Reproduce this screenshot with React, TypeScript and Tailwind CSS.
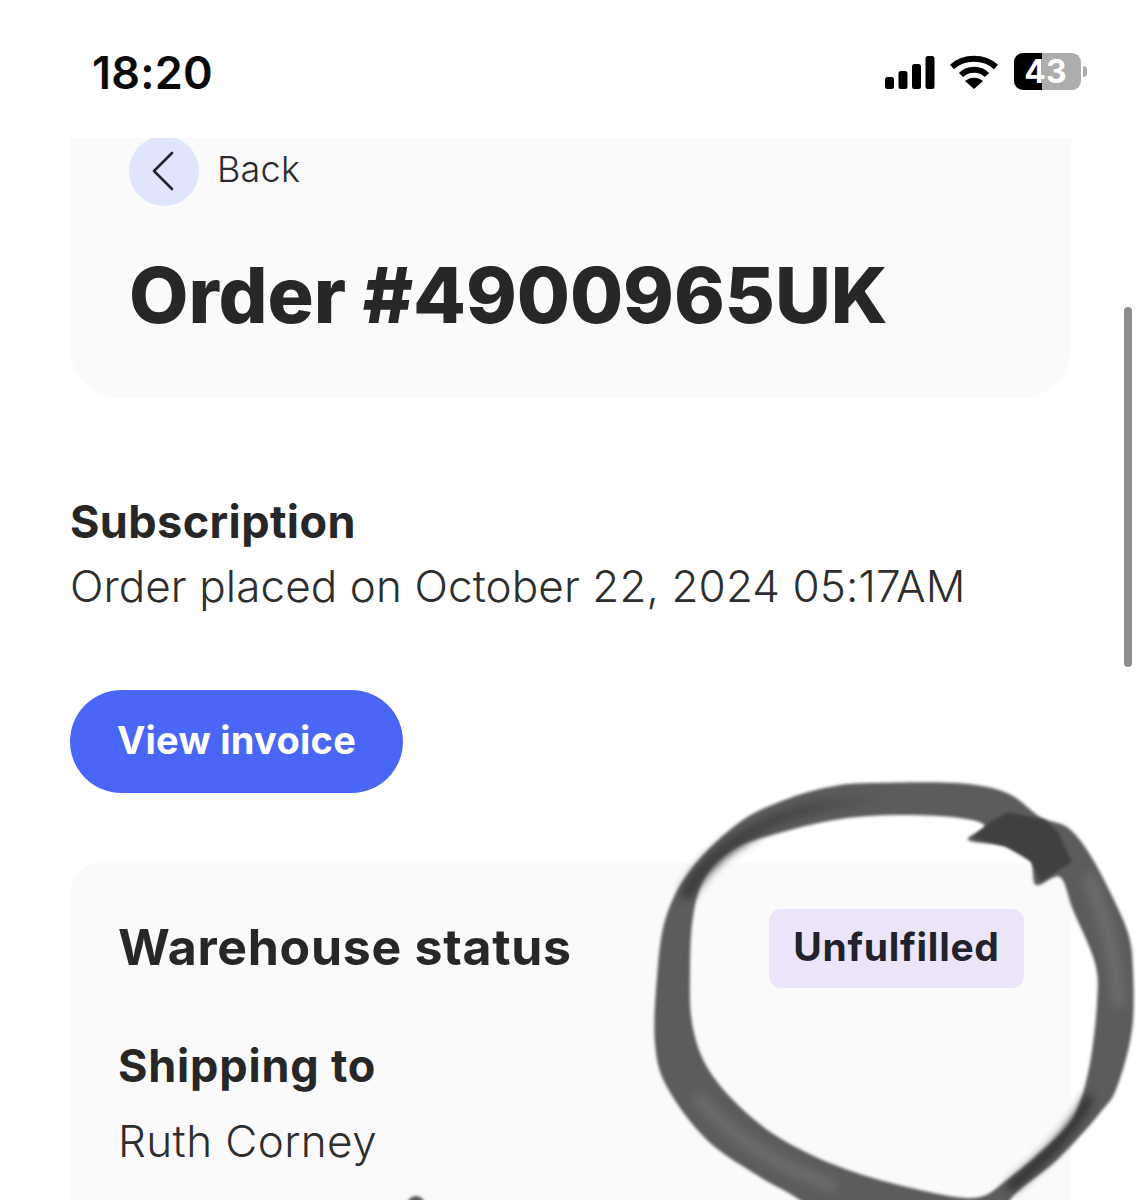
type P = [number, number];

function smooth(pts: P[]): string {
  const n = pts.length;
  let d = `M${pts[0][0]} ${pts[0][1]}`;
  for (let i = 0; i < n; i++) {
    const p0 = pts[(i - 1 + n) % n];
    const p1 = pts[i];
    const p2 = pts[(i + 1) % n];
    const p3 = pts[(i + 2) % n];
    const c1x = p1[0] + (p2[0] - p0[0]) / 6;
    const c1y = p1[1] + (p2[1] - p0[1]) / 6;
    const c2x = p2[0] - (p3[0] - p1[0]) / 6;
    const c2y = p2[1] - (p3[1] - p1[1]) / 6;
    d += ` C${c1x} ${c1y} ${c2x} ${c2y} ${p2[0]} ${p2[1]}`;
  }
  return d + " Z";
}

const outer: P[] = [
  [873, 783], [957, 783], [1007, 793], [1040, 817], [1067, 827], [1087, 850], [1109, 890], [1128, 933],
  [1133, 970], [1132, 1030], [1117, 1087], [1100, 1113], [1057, 1160], [1010, 1200], [1000, 1240], [850, 1240],
  [800, 1200], [760, 1177], [707, 1140], [667, 1087], [655, 1043], [657, 977], [666, 917], [692, 868],
  [740, 822], [790, 798], [835, 786],
];
const inner: P[] = [
  [907, 815], [960, 818], [985, 826], [968, 840], [1005, 846], [1030, 860], [1036, 885], [1060, 877],
  [1073, 910], [1095, 963], [1097, 1003], [1090, 1063], [1077, 1110], [1057, 1137], [1007, 1180], [973, 1198],
  [907, 1187], [840, 1167], [783, 1140], [740, 1107], [707, 1067], [692, 1023], [690, 970], [693, 917],
  [705, 877], [735, 848], [790, 830], [847, 818],
];

export default function App() {
  return (
    <div className="relative h-[1200px] w-[1141px] overflow-hidden bg-white text-[#272727] font-['Inter',sans-serif]">
      {/* status bar */}
      <div className="flex h-[138px] items-start justify-between pl-[92px] pr-[54px] pt-[45px]">
        <span className="text-[45px] font-semibold leading-[55px] tracking-[0.2px] text-[#0a0a0a]">18:20</span>
        <div className="mt-[8px] flex items-center">
          <svg width="52" height="36" viewBox="0 0 52 36" className="block">
            <rect x="0" y="23" width="9" height="12" rx="2.5" fill="#000" />
            <rect x="13.5" y="17" width="9" height="18" rx="2.5" fill="#000" />
            <rect x="27" y="10" width="9" height="25" rx="2.5" fill="#000" />
            <rect x="40.5" y="2" width="9" height="33" rx="2.5" fill="#000" />
          </svg>
          <svg width="48" height="36" viewBox="0 0 48 36" className="ml-[13px] block">
            <path d="M2 13 C14 2 34 2 46 13" fill="none" stroke="#000" strokeWidth="6" />
            <path d="M11 21 C18 14 30 14 37 21" fill="none" stroke="#000" strokeWidth="6" />
            <path d="M24 35 L15 27 C20 22.5 28 22.5 33 27 Z" fill="#000" />
          </svg>
          <div className="relative ml-[16px] flex h-[37px] w-[67px] overflow-hidden rounded-[9px] bg-[#adadad]">
            <div className="h-full w-[28px] bg-black" />
            <span className="absolute inset-0 flex items-center justify-center pr-[4px] text-[32px] font-bold text-white">43</span>
          </div>
          <div className="ml-[2px] h-[11px] w-[4px] rounded-r-full bg-[#adadad]" />
        </div>
      </div>

      {/* header panel */}
      <div className="mx-[70px] h-[260px] overflow-hidden rounded-b-[50px] bg-[#fafafa] pl-[59px]">
        <div className="flex h-[67px] items-center">
          <div className="flex h-[70px] w-[70px] shrink-0 -translate-y-[1px] items-center justify-center rounded-full bg-[#dfe5fb]">
            <svg width="24" height="40" viewBox="0 0 24 40" fill="none" stroke="#24242c" strokeWidth="2.6" strokeLinecap="round" strokeLinejoin="round" className="-ml-[3px]">
              <path d="M21 2 L3 20 L21 38" />
            </svg>
          </div>
          <span className="ml-[18px] -translate-y-[3px] text-[36px] font-light leading-none tracking-[0.2px] text-[#2b2b2f]">Back</span>
        </div>
        <h1 className="mt-[45px] text-[77px] font-extrabold leading-[90px] tracking-[-0.1px]">Order #4900965UK</h1>
      </div>

      {/* details */}
      <div className="px-[70px] pt-[97px]">
        <div className="text-[45px] font-bold leading-[54px] tracking-[0.4px]">Subscription</div>
        <div className="mt-[10px] text-[44px] font-light leading-[54px] tracking-[0.1px] text-[#2e2e2e]">Order placed on October 22, 2024 05:17AM</div>
        <div className="mt-[77px] flex h-[103px] w-[333px] items-center justify-center rounded-full bg-[#4a66f7] pb-[3px] text-[38px] font-bold tracking-[0.25px] text-white">View invoice</div>
      </div>

      {/* warehouse card */}
      <div className="mx-[70px] mt-[70px] h-[400px] rounded-t-[30px] bg-[#fafafa] pl-[48px] pr-[47px] pt-[46px]">
        <div className="flex items-start justify-between">
          <div className="pt-[8px] text-[50px] font-bold leading-[60px] tracking-[0.7px]">Warehouse status</div>
          <div className="flex h-[79px] w-[255px] items-center justify-center rounded-[12px] bg-[#ece5fa] pb-[2px] text-[39px] font-bold tracking-[0.7px] text-[#22222c]">Unfulfilled</div>
        </div>
        <div className="mt-[51px] text-[45px] font-bold leading-[54px] tracking-[0.8px]">Shipping to</div>
        <div className="mt-[21px] text-[44px] font-light leading-[54px] tracking-[0.4px] text-[#2e2e2e]">Ruth Corney</div>
      </div>

      {/* scrollbar */}
      <div className="absolute left-[1124px] top-[307px] h-[360px] w-[8px] rounded-full bg-[#8c8c8c]" />

      {/* hand-drawn circle */}
      <svg className="absolute left-0 top-0" width="1141" height="1200" viewBox="0 0 1141 1200" fill="none">
        <defs>
          <filter id="soft" x="-10%" y="-10%" width="120%" height="120%">
            <feGaussianBlur stdDeviation="1.8" />
          </filter>
          <filter id="softer" x="-30%" y="-30%" width="160%" height="160%">
            <feGaussianBlur stdDeviation="4" />
          </filter>
          <linearGradient id="fade" gradientUnits="userSpaceOnUse" x1="700" y1="860" x2="880" y2="795">
            <stop offset="0" stopColor="#3c3c3c" />
            <stop offset="0.6" stopColor="#4a4a4a" />
            <stop offset="1" stopColor="#5b5b5b" />
          </linearGradient>
        </defs>
        <path d={`${smooth(outer)} ${smooth(inner)}`} fillRule="evenodd" fill="#5b5b5b" filter="url(#soft)" />
        <g filter="url(#softer)" strokeLinecap="round">
          <path d="M688 892 C703 864 732 840 775 820 C810 806 840 802 880 798" stroke="url(#fade)" strokeWidth="14" />
          <path d="M1088 1100 C1070 1136 1040 1162 1012 1186" stroke="#333" strokeWidth="10" />
          <path d="M700 1100 C740 1145 780 1165 830 1185" stroke="#6a6a6a" strokeWidth="14" />
          <path d="M1090 880 C1105 920 1115 950 1118 1000" stroke="#6b6b6b" strokeWidth="14" />
        </g>
        <path d="M972 838 L990 822 L1008 812 L1045 820 L1058 832 L1072 862 L1040 882 L1032 862 L1005 846 Z" fill="#404040" filter="url(#soft)" />
        <circle cx="416" cy="1205" r="9" fill="#555" filter="url(#soft)" />
      </svg>
    </div>
  );
}
